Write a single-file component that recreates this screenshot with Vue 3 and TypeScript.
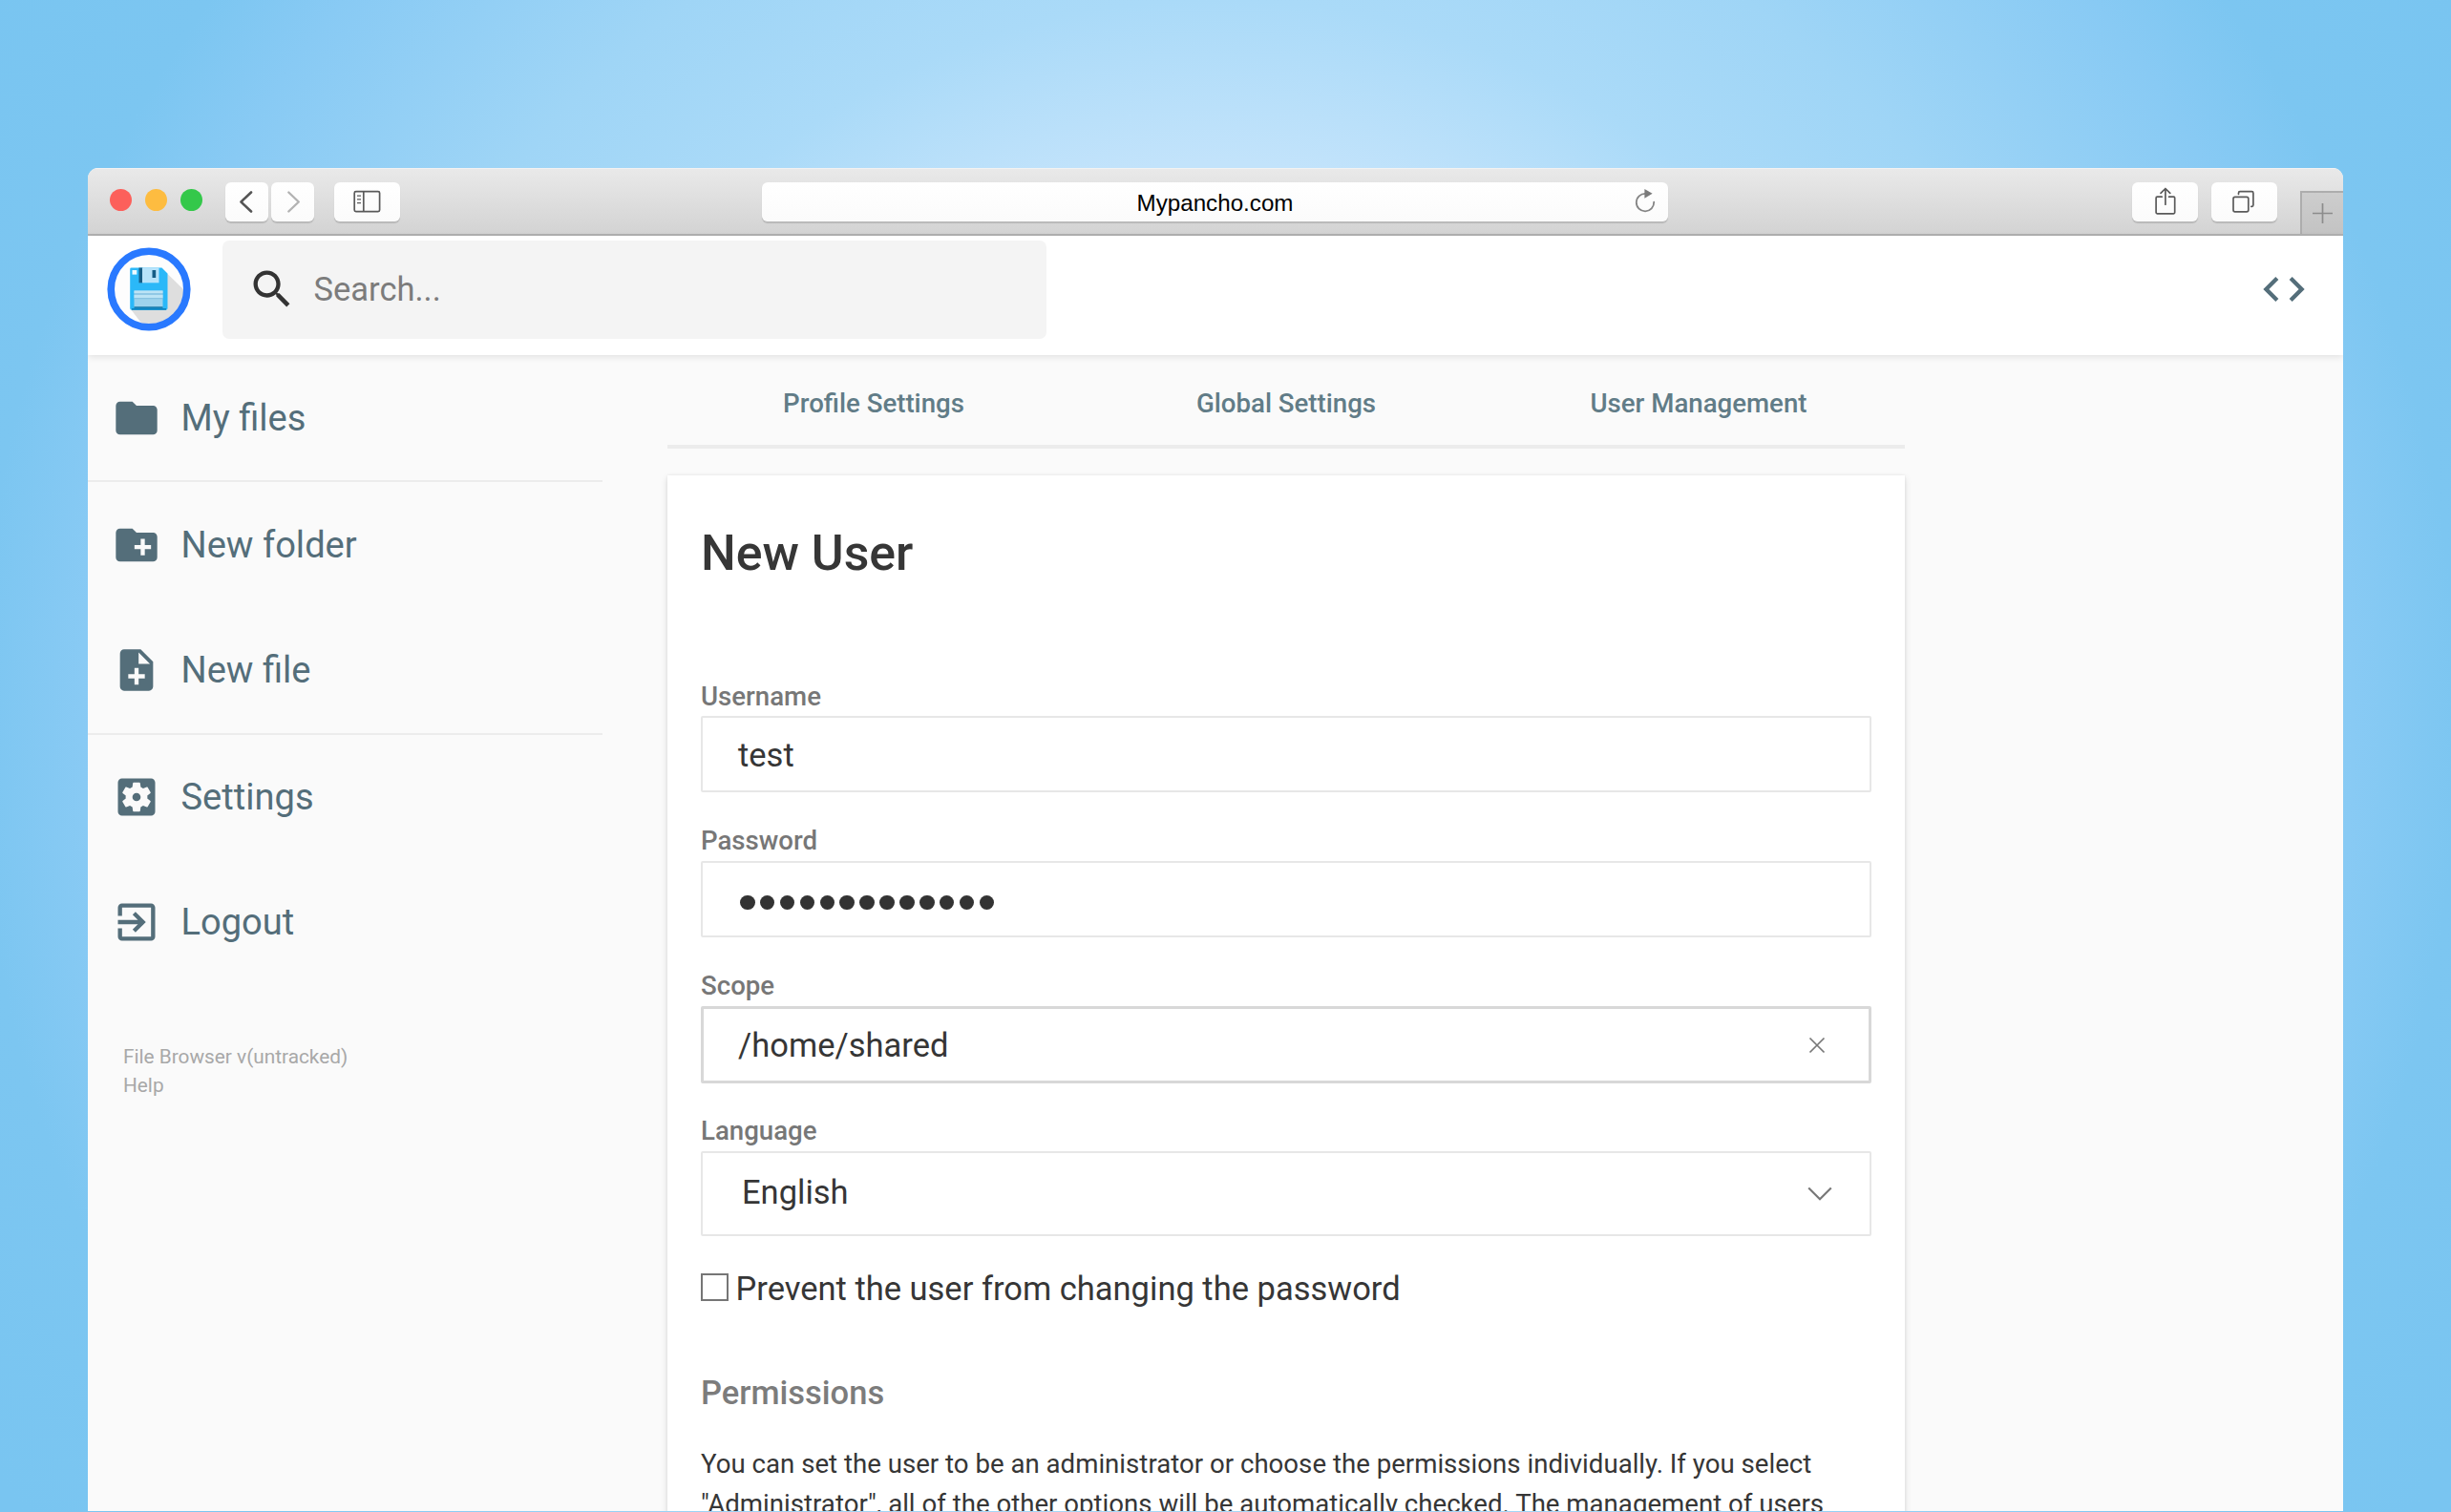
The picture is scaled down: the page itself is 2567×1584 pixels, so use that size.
<script setup lang="ts">
import { ref } from 'vue'

interface NavItem {
  label: string
  icon: string
}

const groups: NavItem[][] = [
  [{ label: 'My files', icon: 'M10 4H4c-1.1 0-1.99.9-1.99 2L2 18c0 1.1.9 2 2 2h16c1.1 0 2-.9 2-2V8c0-1.1-.9-2-2-2h-8l-2-2z' }],
  [
    { label: 'New folder', icon: 'M20 6h-8l-2-2H4c-1.11 0-1.99.89-1.99 2L2 18c0 1.11.89 2 2 2h16c1.11 0 2-.89 2-2V8c0-1.11-.89-2-2-2zm-1 8h-3v3h-2v-3h-3v-2h3V9h2v3h3v2z' },
    { label: 'New file', icon: 'M14 2H6c-1.1 0-1.99.9-1.99 2L4 20c0 1.1.89 2 1.99 2H18c1.1 0 2-.9 2-2V8l-6-6zm2 14h-3v3h-2v-3H8v-2h3v-3h2v3h3v2zm-3-7V3.5L18.5 9H13z' },
  ],
  [
    { label: 'Settings', icon: 'M12 10c-1.1 0-2 .9-2 2s.9 2 2 2 2-.9 2-2-.9-2-2-2zm7-7H5c-1.11 0-2 .9-2 2v14c0 1.1.89 2 2 2h14c1.11 0 2-.9 2-2V5c0-1.1-.89-2-2-2zm-1.75 9c0 .23-.02.46-.05.68l1.48 1.16c.13.11.17.3.08.45l-1.4 2.42c-.09.15-.27.21-.43.15l-1.74-.7c-.36.28-.76.51-1.18.69l-.26 1.85c-.03.17-.18.3-.35.3h-2.8c-.17 0-.32-.13-.35-.29l-.26-1.85c-.43-.18-.82-.41-1.18-.69l-1.74.7c-.16.06-.34 0-.43-.15l-1.4-2.42c-.09-.15-.05-.34.08-.45l1.48-1.16c-.03-.23-.05-.46-.05-.69 0-.23.02-.46.05-.68l-1.48-1.16c-.13-.11-.17-.3-.08-.45l1.4-2.42c.09-.15.27-.21.43-.15l1.74.7c.36-.28.76-.51 1.18-.69l.26-1.85c.03-.17.18-.3.35-.3h2.8c.17 0 .32.13.35.29l.26 1.85c.43.18.82.41 1.18.69l1.74-.7c.16-.06.34 0 .43.15l1.4 2.42c.09.15.05.34-.08.45l-1.48 1.16c.03.23.05.46.05.69z' },
    { label: 'Logout', icon: 'M10.09 15.59L11.5 17l5-5-5-5-1.41 1.41L12.67 11H3v2h9.67l-2.58 2.59zM19 3H5c-1.11 0-2 .9-2 2v4h2V5h14v14H5v-4H3v4c0 1.1.89 2 2 2h14c1.1 0 2-.9 2-2V5c0-1.1-.9-2-2-2z' },
  ],
]

const tabs = ['Profile Settings', 'Global Settings', 'User Management']
const username = ref('test')
const passwordLength = ref(13)
const scope = ref('/home/shared')
const language = ref('English')
</script>

<template>
  <div class="desktop">
    <div class="window">
      <div class="toolbar">
        <div class="lights"><i class="red"></i><i class="amber"></i><i class="green"></i></div>
        <div class="btn small back">
          <svg width="45" height="41" viewBox="0 0 45 41"><path d="M27 10.5 16.5 20.5 27 30.5" fill="none" stroke="#555" stroke-width="2.6" stroke-linecap="round" stroke-linejoin="round" /></svg>
        </div>
        <div class="btn small">
          <svg width="45" height="41" viewBox="0 0 45 41"><path d="M18.3 10.5 28.8 20.5 18.3 30.5" fill="none" stroke="#b3b3b3" stroke-width="2.4" stroke-linecap="round" stroke-linejoin="round" /></svg>
        </div>
        <div class="btn panel">
          <svg width="69" height="41" viewBox="0 0 69 41" fill="none" stroke="#5a5a5a"><rect x="21.2" y="9.7" width="26.4" height="21" rx="1.6" stroke-width="1.7" /><path d="M30.8 10v21" stroke-width="1.7" /><path d="M24 14.2h4M24 17.9h4M24 21.6h4" stroke-width="1.2" /></svg>
        </div>
        <div class="address">
          <span>Mypancho.com</span>
          <svg class="reload" width="24" height="28" viewBox="0 0 24 28"><path d="M12.5 5.9A9.2 9.2 0 1 0 21.2 14.6" fill="none" stroke="#858585" stroke-width="1.8" stroke-linecap="round" /><path d="M11.4 1 19.6 5.8 11.4 10.8Z" fill="#7b7b7b" /></svg>
        </div>
        <div class="btn share">
          <svg width="69" height="41" viewBox="0 0 69 41" fill="none" stroke="#5a5a5a" stroke-width="1.7" stroke-linecap="round" stroke-linejoin="round"><path d="M31.2 15.2h-4.9a1.2 1.2 0 0 0-1.2 1.2v15.2a1.2 1.2 0 0 0 1.2 1.2h17.2a1.2 1.2 0 0 0 1.2-1.2V16.4a1.2 1.2 0 0 0-1.2-1.2h-4.9" /><path d="M34.9 23.2V6.6M30 11.4l4.9-4.9 4.9 4.9" /></svg>
        </div>
        <div class="btn overview">
          <svg width="69" height="41" viewBox="0 0 69 41" fill="none" stroke="#5a5a5a" stroke-width="1.7" stroke-linecap="round"><rect x="23" y="15.3" width="15.8" height="15.6" rx="1.8" /><path d="M28.5 12.3V11.2a1.5 1.5 0 0 1 1.5-1.5h12.4a1.5 1.5 0 0 1 1.5 1.5v12.6a1.5 1.5 0 0 1-1.5 1.5H41.8" /></svg>
        </div>
        <div class="newtab">
          <svg width="21" height="21" viewBox="0 0 21 21"><path d="M10.5 0v21M0 10.5h21" stroke="#8c8c8c" stroke-width="1.7" /></svg>
        </div>
      </div>

      <header class="header">
        <svg class="logo" width="88" height="88" viewBox="0 0 88 88">
          <circle cx="44" cy="44" r="39.8" fill="#fdfdfd" />
          <path d="M63.5 28 L82 46 A38 38 0 0 1 38 82 L25 65Z" fill="#dedede" />
          <path d="M25.5 21.5h32l6 6V64a1.8 1.8 0 0 1-1.8 1.8H26a1.8 1.8 0 0 1-1.8-1.8V22.8a1.3 1.3 0 0 1 1.3-1.3z" fill="#2bb8f8" />
          <path d="M26 64h36v1.8H26z" fill="#1184c0" />
          <path d="M33.5 21.5h4v15.8h-4z" fill="#165d86" />
          <path d="M37 21.5h17.5v15.8H37z" fill="#b7e3fa" />
          <path d="M47.5 24h3.7v8h-3.7z" fill="#165d86" />
          <rect x="26.5" y="24" width="4.8" height="4.6" fill="#eefaff" />
          <path d="M28.5 45.5h30v17.5h-30z" fill="#9fd3ec" />
          <path d="M28.5 45.5h30v2.6h-30zM28.5 50h30v3h-30z" fill="#bce3f5" />
          <path d="M28.5 49h30M28.5 53.8h30" stroke="#83bedd" stroke-width="1.1" />
          <path d="M28.5 63h30" stroke="#0f6f9f" stroke-width="1.4" />
          <circle cx="44" cy="44" r="39.8" fill="none" stroke="#2979ff" stroke-width="7.6" />
        </svg>
        <div class="search">
          <svg width="52" height="52" viewBox="0 0 24 24"><path fill="#333" d="M15.5 14h-.79l-.28-.27C15.41 12.59 16 11.11 16 9.5 16 5.91 13.09 3 9.5 3S3 5.91 3 9.5 5.91 16 9.5 16c1.61 0 3.09-.59 4.23-1.57l.27.28v.79l5 4.99L20.49 19l-4.99-5zm-6 0C7.01 14 5 11.99 5 9.5S7.01 5 9.5 5 14 7.01 14 9.5 11.99 14 9.5 14z" /></svg>
          <span>Search...</span>
        </div>
        <svg class="code" width="52" height="52" viewBox="0 0 24 24"><path fill="#546e7a" d="M9.4 16.6L4.8 12l4.6-4.6L8 6l-6 6 6 6 1.4-1.4zm5.2 0l4.6-4.6-4.6-4.6L16 6l6 6-6 6-1.4-1.4z" /></svg>
      </header>

      <div class="body">
        <nav class="sidebar">
          <div v-for="(group, g) in groups" :key="g" class="group">
            <div v-for="item in group" :key="item.label" class="item">
              <svg width="52" height="52" viewBox="0 0 24 24"><path fill="#546e7a" :d="item.icon" /></svg>
              <span>{{ item.label }}</span>
            </div>
          </div>
          <div class="credits"><span>File Browser v(untracked)</span><span>Help</span></div>
        </nav>

        <main class="content">
          <div class="tabs"><div v-for="tab in tabs" :key="tab">{{ tab }}</div></div>
          <section class="card">
            <h2>New User</h2>
            <div class="field"><label>Username</label><div class="input">{{ username }}</div></div>
            <div class="field"><label>Password</label><div class="input dots"><i v-for="n in passwordLength" :key="n"></i></div></div>
            <div class="field">
              <label>Scope</label>
              <div class="input focus">{{ scope }}
                <svg width="18" height="18" viewBox="0 0 18 18"><path d="M1.5 1.5l15 15M16.5 1.5l-15 15" stroke="#777" stroke-width="1.7" /></svg>
              </div>
            </div>
            <div class="field">
              <label>Language</label>
              <div class="input select">{{ language }}
                <svg width="26" height="16" viewBox="0 0 26 16"><path d="M1.2 1.5 13 13.3 24.8 1.5" fill="none" stroke="#777" stroke-width="2.1" /></svg>
              </div>
            </div>
            <div class="check"><i></i><span>Prevent the user from changing the password</span></div>
            <h3>Permissions</h3>
            <p>You can set the user to be an administrator or choose the permissions individually. If you select<br>"Administrator", all of the other options will be automatically checked. The management of users</p>
          </section>
        </main>
      </div>
    </div>
  </div>
</template>

<style>
body { margin: 0; overflow: hidden; }
</style>

<style scoped>
.desktop {
  box-sizing: border-box;
  width: 2567px;
  height: 1584px;
  padding: 176px 113px 1px 92px;
  overflow: hidden;
  background: radial-gradient(circle 1500px at 1275px 760px, #c6e5fb 0, #c2e3fb 590px, #aadaf8 760px, #9fd5f6 940px, #88caf4 1190px, #7cc6f1 1300px, #79c5f1 1500px);
  font-family: Roboto, "Liberation Sans", sans-serif;
  color: #363636;
}
.window {
  display: flex;
  flex-direction: column;
  height: 1407px;
  overflow: hidden;
  border-radius: 11px 11px 0 0;
  background: #fafafa;
}
.toolbar {
  box-sizing: border-box;
  display: flex;
  flex: none;
  height: 71px;
  padding-top: 14px;
  border-top: 1px solid #f2f2f2;
  border-bottom: 2px solid #b1b1b1;
  background: linear-gradient(#e9e9e9, #d3d3d3);
}
.lights { display: flex; gap: 14px; margin: 7px 0 0 23px; width: 121px; }
.lights i { width: 23px; height: 23px; border-radius: 50%; }
.red { background: #fc605b; }
.amber { background: #fdbc40; }
.green { background: #34c84a; }
.btn, .address {
  height: 41px;
  border-radius: 6px;
  background: linear-gradient(#fff, #fbfbfb);
  box-shadow: 0 1.5px 1px rgba(0, 0, 0, .14);
}
.btn { flex: none; width: 69px; }
.btn.small { width: 45px; margin-right: 3px; }
.btn svg { display: block; }
.panel { margin-left: 17.5px; }
.address {
  position: relative;
  flex: none;
  width: 949px;
  margin-left: 379.5px;
  text-align: center;
  font: 24.2px/43px "Liberation Sans", Arial, sans-serif;
  color: #000;
}
.reload { position: absolute; right: 12px; top: 6px; }
.share { margin-left: 485.5px; }
.overview { margin-left: 14.5px; }
.newtab {
  display: flex;
  align-items: center;
  justify-content: center;
  flex: 1;
  margin: 9px 0 0 24px;
  border: solid #adadad;
  border-width: 2px 0 0 2px;
  background: linear-gradient(#cdcdcd, #c3c3c3);
}
.header {
  position: relative;
  box-sizing: border-box;
  display: flex;
  flex: none;
  align-items: center;
  height: 125px;
  padding: 4.5px 36px 17.5px 19.5px;
  background: #fff;
  box-shadow: 0 2px 7px rgba(0, 0, 0, .1);
}
.search {
  display: flex;
  align-items: center;
  gap: 18px;
  box-sizing: border-box;
  width: 863px;
  height: 103px;
  margin-left: 33px;
  padding-left: 26px;
  border-radius: 7px;
  background: #f4f4f4;
  color: #7c7c7c;
  font-size: 34.5px;
}
.code { margin-left: auto; }
.body { display: flex; flex: 1; min-height: 0; }
.sidebar { width: 539px; }
.group + .group { border-top: 2px solid #ececec; }
.item {
  display: flex;
  align-items: center;
  gap: 20.5px;
  height: 131.2px;
  padding-left: 25px;
  color: #546e7a;
  font-size: 38.1px;
}
.credits {
  display: flex;
  flex-direction: column;
  margin: 60px 0 0 37px;
  color: #a8a8a8;
  font-size: 20.8px;
  line-height: 30.3px;
}
.content { width: 1296px; margin-left: 68px; }
.tabs {
  display: flex;
  height: 94px;
  border-bottom: 4px solid #ececec;
  color: #617c87;
  font-size: 27.63px;
  font-weight: 500;
  line-height: 102px;
  text-align: center;
}
.tabs div { flex: 1; }
.card {
  box-sizing: border-box;
  height: 1200px;
  margin-top: 28px;
  padding: 51.5px 35px 0;
  background: #fff;
  box-shadow: 0 3px 7px rgba(0, 0, 0, .13), 0 0 3px rgba(0, 0, 0, .07);
}
h2 { margin: 0 0 103px; font-size: 51.8px; font-weight: 500; line-height: 60px; }
.field { height: 151.9px; }
label {
  display: block;
  height: 37.9px;
  color: #777;
  font-size: 27.63px;
  font-weight: 500;
  line-height: 33.4px;
}
.input {
  box-sizing: border-box;
  display: flex;
  align-items: center;
  justify-content: space-between;
  height: 80px;
  padding: 1.5px 45.5px 0 37px;
  border: 2px solid #e7e7e7;
  border-radius: 2px;
  font-size: 34.5px;
}
.dots { justify-content: flex-start; gap: 5.4px; padding-left: 39px; }
.dots i { width: 15.5px; height: 15.5px; margin-top: 5px; border-radius: 50%; background: #333; }
.focus { height: 81px; border: 3px solid #d8d8d8; padding: 1.5px 45px 0 36px; }
.select { height: 89px; padding: 0 39px 2.5px 41px; }
.select svg { margin-top: 3px; }
.check { display: flex; align-items: center; gap: 7.5px; margin: 8px 0 0; font-size: 34.5px; line-height: 44px; }
.check i { box-sizing: border-box; width: 29px; height: 29px; border: 2.5px solid #767676; margin-bottom: 4px; }
h3 { margin: 65px 0 0; color: #7c7c7c; font-size: 34.5px; font-weight: 500; line-height: 44px; }
p { margin: 32px 0 0; font-size: 27.63px; line-height: 41.6px; white-space: nowrap; }
</style>
